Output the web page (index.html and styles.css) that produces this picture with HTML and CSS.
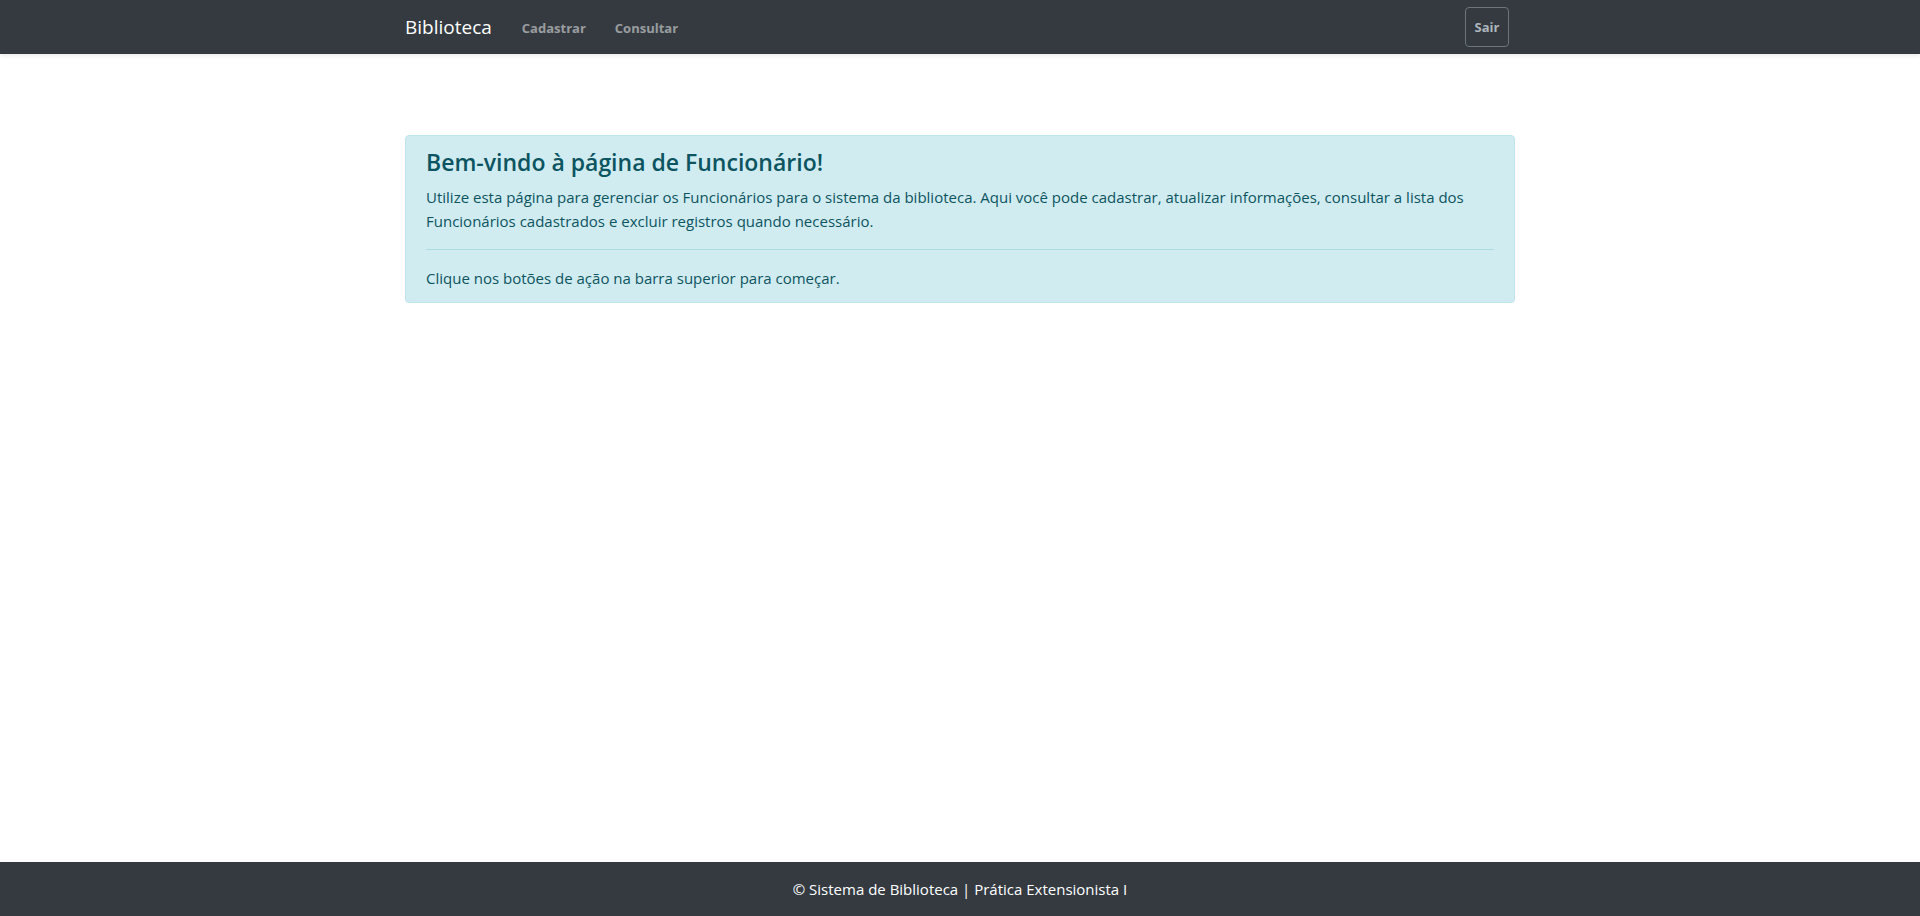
FILE: index.html
```html
<!DOCTYPE html>
<html lang="pt-BR">
<head>
<meta charset="utf-8">
<title>Biblioteca - Funcionário</title>
<link rel="stylesheet" href="styles.css">
</head>
<body>
<div class="page">
  <nav class="navbar">
    <div class="container nav-inner">
      <a class="brand" href="#">Biblioteca</a>
      <ul class="nav-links">
        <li><a href="#">Cadastrar</a></li>
        <li><a href="#">Consultar</a></li>
      </ul>
      <button class="btn-sair">Sair</button>
    </div>
  </nav>
  <main class="container main">
    <div class="alert">
      <h4 class="alert-heading">Bem-vindo à página de Funcionário!</h4>
      <p class="alert-text">Utilize esta página para gerenciar os Funcionários para o sistema da biblioteca. Aqui você pode cadastrar, atualizar informações, consultar a lista dos Funcionários cadastrados e excluir registros quando necessário.</p>
      <hr class="alert-hr">
      <p class="alert-last">Clique nos botões de ação na barra superior para começar.</p>
    </div>
  </main>
  <footer class="footer">
    <span>© Sistema de Biblioteca | Prática Extensionista I</span>
  </footer>
</div>
</body>
</html>
```
FILE: styles.css
```css
* { box-sizing: border-box; }
html, body { margin: 0; padding: 0; height: 100%; }
body {
  font-family: "Open Sans", "Noto Sans", sans-serif;
  font-size: 15px;
  line-height: 24px;
  color: #212529;
  background: #fff;
}
.page { display: flex; flex-direction: column; min-height: 100vh; }
.container { width: 1140px; margin: 0 auto; padding: 0 15px; }
.navbar {
  background: #343a40;
  height: 54px;
  box-shadow: 0 2px 4px rgba(0,0,0,.08);
  position: relative;
  z-index: 1;
}
.nav-inner { display: flex; align-items: center; height: 100%; }
.brand {
  color: #fff;
  text-decoration: none;
  font-size: 19px;
  margin-right: 30px;
  line-height: 30px;
}
.nav-links { list-style: none; margin: 0; padding: 0; display: flex; gap: 29px; flex: 1; }
.nav-links a {
  color: rgba(255,255,255,.5);
  text-decoration: none;
  font-size: 13px;
  font-weight: 700;
}
.btn-sair {
  background: transparent;
  border: 1px solid #6c757d;
  color: #adb5bd;
  font-family: inherit;
  font-weight: 700;
  font-size: 13px;
  border-radius: 4px;
  width: 44px;
  height: 40px;
  padding: 0;
  margin-right: 6px;
  cursor: pointer;
}
.main { flex: 1; padding-top: 81px; }
.alert {
  background: #d1ecf1;
  border: 1px solid #bee5eb;
  color: #0c5460;
  border-radius: 4px;
  padding: 12px 20px 12px;
}
.alert-heading { font-size: 23px; font-weight: 600; line-height: 29px; margin: 0 0 8px; }
.alert-text { margin: 0 0 16px; }
.alert-hr { border: 0; border-top: 1px solid #abdde5; margin: 0 0 16px; }
.alert-last { margin: 0; }
.footer {
  background: #343a40;
  color: #fff;
  height: 54px;
  display: flex;
  align-items: center;
  justify-content: center;
}
```
